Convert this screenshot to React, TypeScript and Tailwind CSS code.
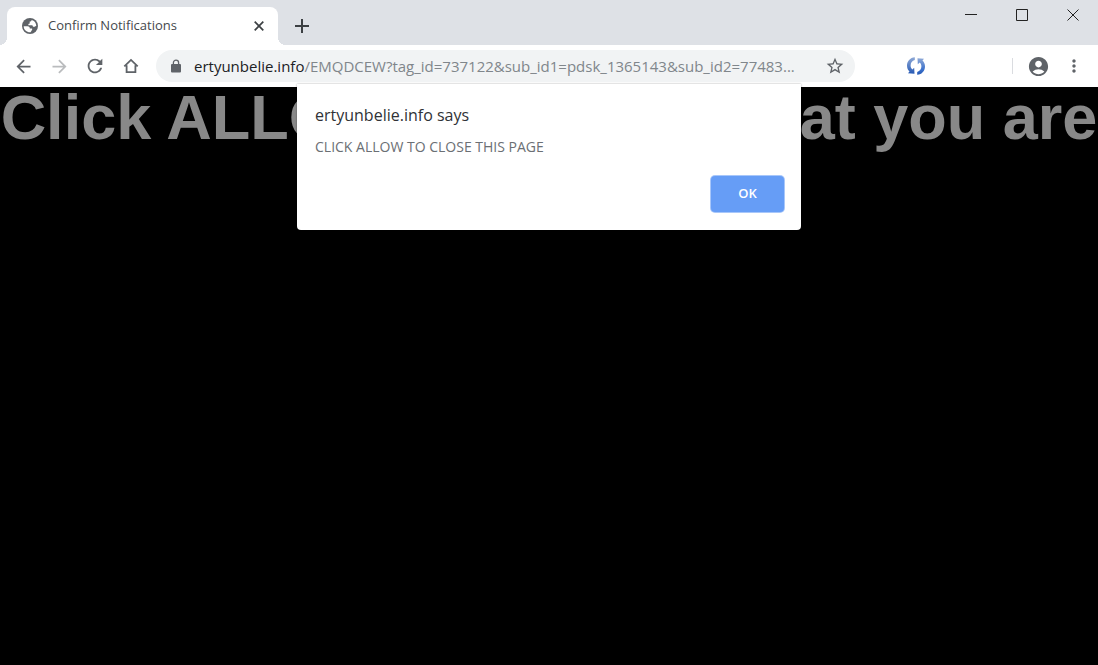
import { useState } from 'react';
import type { ReactNode } from 'react';
import { MdAccountCircle, MdArrowBack, MdArrowForward, MdMoreVert, MdRefresh, MdStarBorder } from 'react-icons/md';

interface IconButtonProps {
  label: string;
  className?: string;
  disabled?: boolean;
  children: ReactNode;
}

function IconButton({ label, className = 'w-9 h-9', disabled, children }: IconButtonProps) {
  return (
    <button
      type="button"
      aria-label={label}
      disabled={disabled}
      className={`flex shrink-0 items-center justify-center ${className}`}
    >
      {children}
    </button>
  );
}

function GlobeIcon() {
  return (
    <svg viewBox="0 0 16 16" className="w-4 h-4 shrink-0" aria-hidden="true">
      <circle cx="8" cy="8" r="8" fill="#5f6368" />
      <path
        d="M1.700 8.300H5.500c1.800 0 2.300.9 2.300 2.300h1.700c.7 0 .9.500.6 1.100l-1.500 2.600C4.900 14.600 1.700 12 1.700 8.300z"
        fill="#fff"
      />
      <path
        d="M9.600 1.900C9.500 3 8.800 3.500 7.700 3.500v1.600c0 .7-.6.900-1.300.9v1.300h3.300c.9 0 1.200.6 1.200 1.400h1.700c.7 0 1-.7 1.700-.7C14.300 4.900 12.400 2.500 9.600 1.900z"
        fill="#fff"
      />
    </svg>
  );
}

function LockIcon() {
  return (
    <svg viewBox="0 0 12 14" className="w-3 h-[14px] shrink-0" aria-hidden="true">
      <rect x="1" y="5" width="10" height="8.500" rx="1" fill="#5f6368" />
      <path d="M3.400 5.500V3.700a2.600 2.600 0 0 1 5.200 0v1.800" fill="none" stroke="#5f6368" strokeWidth="1.300" />
    </svg>
  );
}

function HomeIcon() {
  return (
    <svg viewBox="0 0 16 16" className="w-4 h-4" fill="none" stroke="#5f6368" strokeWidth="1.800" aria-hidden="true">
      <path d="M1.300 8.300L8 1.900l6.700 6.400M3.600 7.200v7h8.800v-7" />
    </svg>
  );
}

function SyncIcon() {
  return (
    <svg viewBox="0 0 20 20" className="w-5 h-5" aria-hidden="true">
      <defs>
        <linearGradient id="syncLeft" x1="0" y1="0" x2="0" y2="1">
          <stop offset="0" stopColor="#8fa9d6" />
          <stop offset="1" stopColor="#2558b4" />
        </linearGradient>
        <linearGradient id="syncRight" x1="0" y1="0" x2="0" y2="1">
          <stop offset="0" stopColor="#8fa9d6" />
          <stop offset="0.700" stopColor="#3a70cb" />
          <stop offset="1" stopColor="#2558b4" />
        </linearGradient>
      </defs>
      <path
        d="M8.800 1.200C4 1.500 1 5.300 1 9.500c0 2.500.9 4.500 2.500 6L2 17.200l6.500.6-.3-6-1.900 1.600C5.200 12.400 4.600 11.100 4.600 9.500c0-2.500 1.500-4.600 4.200-5.400z"
        fill="url(#syncLeft)"
      />
      <path
        d="M11.200 18.800c4.800-.3 7.800-4.100 7.800-8.300 0-2.500-.9-4.500-2.500-6L18 2.800l-6.500-.6.3 6 1.900-1.600c1.100 1 1.700 2.300 1.700 3.900 0 2.500-1.500 4.600-4.200 5.400z"
        fill="url(#syncRight)"
      />
    </svg>
  );
}

function TabStrip() {
  return (
    <div className="flex h-[45px] items-end bg-[#dee1e6] pl-[7px]">
      <div className="relative flex h-[38px] w-[271px] items-center rounded-t-lg bg-white pl-[15px] pr-[13px]">
        <span className="absolute -left-2 bottom-0 w-2 h-2 bg-[radial-gradient(circle_at_0_0,transparent_8px,#fff_8px)]" />
        <span className="absolute -right-2 bottom-0 w-2 h-2 bg-[radial-gradient(circle_at_100%_0,transparent_8px,#fff_8px)]" />
        <GlobeIcon />
        <span className="ml-[10px] flex-1 truncate text-[13px] text-[#45494d]">Confirm Notifications</span>
        <IconButton label="Close tab" className="w-3 h-5">
          <svg viewBox="0 0 10 10" className="w-[10px] h-[10px]" stroke="#3c4043" strokeWidth="1.700" aria-hidden="true">
            <path d="M.7.7l8.600 8.600M9.300.7L.7 9.300" />
          </svg>
        </IconButton>
      </div>
      <IconButton label="New tab" className="ml-[6px] w-9 h-[38px]">
        <svg viewBox="0 0 14 14" className="w-[14px] h-[14px]" stroke="#3c4043" strokeWidth="2" aria-hidden="true">
          <path d="M7 0v14M0 7h14" />
        </svg>
      </IconButton>

      {/* Window controls */}
      <div className="ml-auto flex self-start">
        <IconButton label="Minimize" className="w-[51px] h-[30px]">
          <svg viewBox="0 0 12 12" className="w-3 h-3" stroke="#222" aria-hidden="true">
            <path d="M0 5.500h12" />
          </svg>
        </IconButton>
        <IconButton label="Maximize" className="w-[51px] h-[30px]">
          <svg viewBox="0 0 12 12" className="w-3 h-3" fill="none" stroke="#222" aria-hidden="true">
            <path d="M.5.5h11v11H.5z" />
          </svg>
        </IconButton>
        <IconButton label="Close" className="w-[51px] h-[30px]">
          <svg viewBox="0 0 12 12" className="w-3 h-3" stroke="#222" aria-hidden="true">
            <path d="M.5.5l11 11M11.500.5l-11 11" />
          </svg>
        </IconButton>
      </div>
    </div>
  );
}

function Toolbar() {
  return (
    <div className="flex h-[42px] items-center bg-white pl-[5px] pr-[6px] text-[#5f6368]">
      <IconButton label="Back">
        <MdArrowBack className="w-[21px] h-[21px]" />
      </IconButton>
      <IconButton label="Forward" disabled>
        <MdArrowForward className="w-[21px] h-[21px] text-[#babcbe]" />
      </IconButton>
      <IconButton label="Reload">
        <MdRefresh className="w-[22px] h-[22px]" />
      </IconButton>
      <IconButton label="Home">
        <HomeIcon />
      </IconButton>
      <div className="ml-[7px] flex h-8 min-w-0 flex-1 items-center rounded-full bg-[#f1f3f4] pl-[14px] pr-[10px]">
        <LockIcon />
        <span className="ml-3 flex-1 truncate text-[15px] text-[#80868b]">
          <span className="text-[#202124]">ertyunbelie.info</span>
          /EMQDCEW?tag_id=737122&amp;sub_id1=pdsk_1365143&amp;sub_id2=77483...
        </span>
        <IconButton label="Bookmark this page" className="w-5 h-8">
          <MdStarBorder className="w-5 h-5" />
        </IconButton>
      </div>
      <IconButton label="Sync extension" className="ml-[43px] w-9 h-9">
        <SyncIcon />
      </IconButton>
      <div className="ml-[78px] h-4 w-px bg-[#dadce0]" />
      <IconButton label="Profile" className="ml-[7px] w-9 h-9">
        <MdAccountCircle className="w-[23px] h-[23px]" />
      </IconButton>
      <IconButton label="Menu">
        <MdMoreVert className="w-5 h-5" />
      </IconButton>
    </div>
  );
}

export default function App() {
  const [open, setOpen] = useState(true);

  return (
    <div className="relative flex min-h-screen flex-col overflow-hidden bg-black font-['Open_Sans','Noto_Sans',sans-serif]">
      <TabStrip />
      <Toolbar />
      <main className="flex flex-1 justify-center">
        <h1 className="whitespace-nowrap font-['Liberation_Sans',sans-serif] text-[63px] leading-[60px] font-bold text-[#888]">
          Click ALLOW to confirm that you are
        </h1>
      </main>

      {open && (
        <div
          role="dialog"
          aria-labelledby="dialog-title"
          className="absolute left-1/2 top-[84px] w-[504px] -translate-x-1/2 rounded-b-sm bg-white pl-[18px] pr-[17px] pt-[19px] pb-[18px] shadow-[0_0_2px_rgba(0,0,0,0.4)]"
        >
          <h2 id="dialog-title" className="text-base leading-6 text-[#303236]">
            ertyunbelie.info says
          </h2>
          <p className="mt-2 text-sm leading-6 text-[#6b6f74]">CLICK ALLOW TO CLOSE THIS PAGE</p>
          <div className="mt-[17px] flex justify-end">
            <button
              type="button"
              onClick={() => setOpen(false)}
              className="h-9 w-[73px] rounded-sm bg-[#669df6] text-[13px] font-semibold text-white ring-1 ring-[#a8c7fa]"
            >
              OK
            </button>
          </div>
        </div>
      )}
    </div>
  );
}
